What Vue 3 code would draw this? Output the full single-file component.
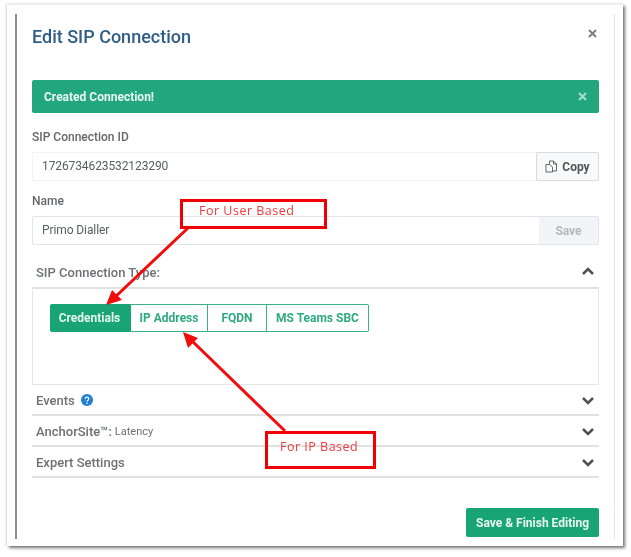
<script setup>
const tabs = ['Credentials', 'IP Address', 'FQDN', 'MS Teams SBC']
const rows = [
  { key: 'events', label: 'Events', help: true },
  { key: 'anchor', label: 'AnchorSite™:', note: 'Latency' },
  { key: 'expert', label: 'Expert Settings' }
]
</script>

<template>
  <div class="page">
    <div class="frame">
      <div class="modal">
        <header class="head">
          <h1>Edit SIP Connection</h1>
          <svg class="close" width="9" height="9" viewBox="0 0 9 9"><path d="M1 1l7 7M8 1l-7 7" /></svg>
        </header>

        <div class="alert">
          <span>Created Connection!</span>
          <svg class="alert-x" width="9" height="9" viewBox="0 0 9 9"><path d="M1 1l7 7M8 1l-7 7" /></svg>
        </div>

        <div class="label first">SIP Connection ID</div>
        <div class="field plain">
          <div class="value">1726734623532123290</div>
          <button class="copy">
            <svg width="13" height="13" viewBox="0 0 13 13" fill="none" stroke="#666" stroke-width="1">
              <path d="M4.500 4V1h4l3 3v7H8" />
              <path d="M1 4.500h3.500L7.500 7v5H1z" />
              <path d="M8.500 1v3h3" />
            </svg>
            Copy
          </button>
        </div>

        <div class="label second">Name</div>
        <div class="field">
          <div class="value">Primo Dialler</div>
          <button class="save">Save</button>
        </div>

        <div class="section-head">
          <span>SIP Connection Type:</span>
          <svg class="chev up" width="14" height="9" viewBox="0 0 14 9"><path d="M2 7l5-5 5 5" /></svg>
        </div>

        <div class="panel">
          <div class="tabs">
            <button v-for="(t, i) in tabs" :key="t" class="tab" :class="{ active: i === 0 }">{{ t }}</button>
          </div>
        </div>

        <div v-for="r in rows" :key="r.key" class="row">
          <span class="row-label">
            {{ r.label }}
            <small v-if="r.note">{{ r.note }}</small>
            <svg v-if="r.help" class="help" width="12" height="12" viewBox="0 0 12 12">
              <circle cx="6" cy="6" r="6" fill="#1f7fd1" />
              <path d="M4.300 4.700a1.700 1.700 0 1 1 2.600 1.500c-.6.350-.9.600-.9 1.200" fill="none" stroke="#fff" stroke-width="1.300" />
              <circle cx="6" cy="9.200" r=".8" fill="#fff" />
            </svg>
          </span>
          <svg class="chev" width="14" height="9" viewBox="0 0 14 9"><path d="M2 2l5 5 5-5" /></svg>
        </div>

        <footer class="foot">
          <button class="finish">Save &amp; Finish Editing</button>
        </footer>
      </div>
    </div>

    <svg class="arrows" width="631" height="557" viewBox="0 0 631 557">
      <g fill="#f00d0d">
        <path d="M188 228L113 299" fill="none" stroke="#f00d0d" stroke-width="3" />
        <path d="M106 305l6-15 10 10z" />
        <path d="M285 431L190 339" fill="none" stroke="#f00d0d" stroke-width="3" />
        <path d="M183 332l15 6-10 10z" />
      </g>
    </svg>
    <div class="note user">For User Based</div>
    <div class="note ip">For IP Based</div>
  </div>
</template>

<style scoped>
.page {
  position: relative;
  width: 631px;
  height: 557px;
  background: #fff;
  font-family: Roboto, "Liberation Sans", sans-serif;
  overflow: hidden;
  filter: blur(0.4px);
}
.frame {
  position: absolute;
  left: 7px;
  top: 4px;
  width: 616px;
  height: 542px;
  box-sizing: border-box;
  padding: 9px 8px 7px 8px;
  background: #fff;
  border-top: 1px solid #eee;
  box-shadow: 2px 2px 3px rgba(70, 70, 70, 0.75), -1px 0 2px rgba(120, 120, 120, 0.25);
}
.modal {
  height: 100%;
  box-sizing: border-box;
  border-left: 2px solid #8c8f91;
  border-right: 1px solid #dfe3e5;
  padding: 0 15px 0 15px;
  display: flex;
  flex-direction: column;
}
.head {
  height: 66px;
  flex: none;
  display: flex;
  justify-content: space-between;
  align-items: flex-start;
}
h1 {
  margin: 12px 0 0;
  font-size: 18px;
  line-height: 22px;
  font-weight: 500;
  color: #2f5d84;
}
.close {
  margin: 15px 2px 0 0;
}
.close path {
  stroke: #7b8083;
  stroke-width: 2;
  fill: none;
}
.alert {
  height: 33px;
  flex: none;
  box-sizing: border-box;
  padding: 0 12px;
  background: #22a77c;
  border-radius: 2px;
  color: #e9f7f2;
  font-size: 12px;
  font-weight: 700;
  display: flex;
  align-items: center;
  justify-content: space-between;
}
.alert-x path {
  stroke: #a6dcc9;
  stroke-width: 2.200;
  fill: none;
}
.label {
  font-size: 12px;
  line-height: 14px;
  font-weight: 500;
  color: #62676b;
  flex: none;
}
.label.first {
  margin-top: 17px;
}
.label.second {
  margin-top: 13px;
}
.field {
  margin-top: 8px;
  height: 29px;
  flex: none;
  box-sizing: border-box;
  display: flex;
  border: 1px solid #e1e4ea;
  border-radius: 2px;
  background: #fff;
}
.field.plain {
  border-color: #f1f2f4;
}
.value {
  flex: 1;
  padding-left: 9px;
  font-size: 12px;
  line-height: 27px;
  letter-spacing: -0.1px;
  color: #595d61;
}
button {
  font-family: inherit;
  cursor: pointer;
}
.copy {
  width: 63px;
  margin: -1px -1px -1px 0;
  display: flex;
  align-items: center;
  justify-content: center;
  gap: 4px;
  padding: 0;
  background: #f8f9fa;
  border: 1px solid #d8dce0;
  border-radius: 2px;
  font-size: 12px;
  font-weight: 700;
  color: #50555a;
}
.save {
  width: 59px;
  padding: 0;
  background: #f2f5f7;
  border: 0;
  font-size: 12px;
  font-weight: 700;
  color: #b3b8bb;
}
.section-head {
  margin-top: 15px;
  height: 27px;
  flex: none;
  padding: 0 4px 3px;
  box-sizing: border-box;
  display: flex;
  align-items: center;
  justify-content: space-between;
  font-size: 13px;
  font-weight: 500;
  color: #6c7175;
}
.chev path {
  fill: none;
  stroke: #4d5155;
  stroke-width: 2.500;
}
.chev.up {
  margin-bottom: 1px;
}
.panel {
  height: 98px;
  flex: none;
  box-sizing: border-box;
  border: 1px solid #e4e6e7;
  border-top: 2px solid #dfe1e2;
  padding: 15px 17px;
}
.tabs {
  display: flex;
}
.tab {
  height: 28px;
  box-sizing: border-box;
  padding: 0;
  background: #fff;
  border: 1px solid #3bae8a;
  border-left-width: 0;
  font-size: 12px;
  font-weight: 700;
  color: #2fa981;
}
.tab:nth-child(1) {
  width: 81px;
  border-left-width: 1px;
  border-radius: 2px 0 0 2px;
  background: #18a475;
  border-color: #18a475;
  color: #e6f6f0;
  text-indent: -2px;
}
.tab:nth-child(2) {
  width: 77px;
}
.tab:nth-child(3) {
  width: 59px;
}
.tab:nth-child(4) {
  width: 102px;
  border-radius: 0 2px 2px 0;
}
.row {
  height: 31px;
  flex: none;
  box-sizing: border-box;
  border-bottom: 2px solid #dfe1e2;
  padding: 1px 4px 0;
  display: flex;
  align-items: center;
  justify-content: space-between;
}
.row-label {
  display: flex;
  align-items: center;
  gap: 3px;
  font-size: 13px;
  font-weight: 500;
  color: #6c7175;
}
.row-label small {
  font-size: 11px;
  font-weight: 400;
}
.help {
  margin-left: 3px;
}
.foot {
  margin-top: 30px;
  display: flex;
  justify-content: flex-end;
}
.finish {
  width: 133px;
  height: 29px;
  padding: 0;
  background: #18a475;
  border: 0;
  border-radius: 2px;
  color: #e9f7f2;
  font-size: 12px;
  font-weight: 700;
}
.arrows {
  position: absolute;
  left: 0;
  top: 0;
  pointer-events: none;
}
.note {
  position: absolute;
  box-sizing: border-box;
  border: 3px solid #f00000;
  font-family: "Open Sans", sans-serif;
  font-size: 12.500px;
  letter-spacing: 0.5px;
  color: #f03a3a;
}
.user {
  left: 180px;
  top: 199px;
  width: 147px;
  height: 30px;
  padding: 0 0 0 16px;
}
.ip {
  left: 265px;
  top: 431px;
  width: 111px;
  height: 38px;
  padding: 4px 0 0 12px;
}
</style>
